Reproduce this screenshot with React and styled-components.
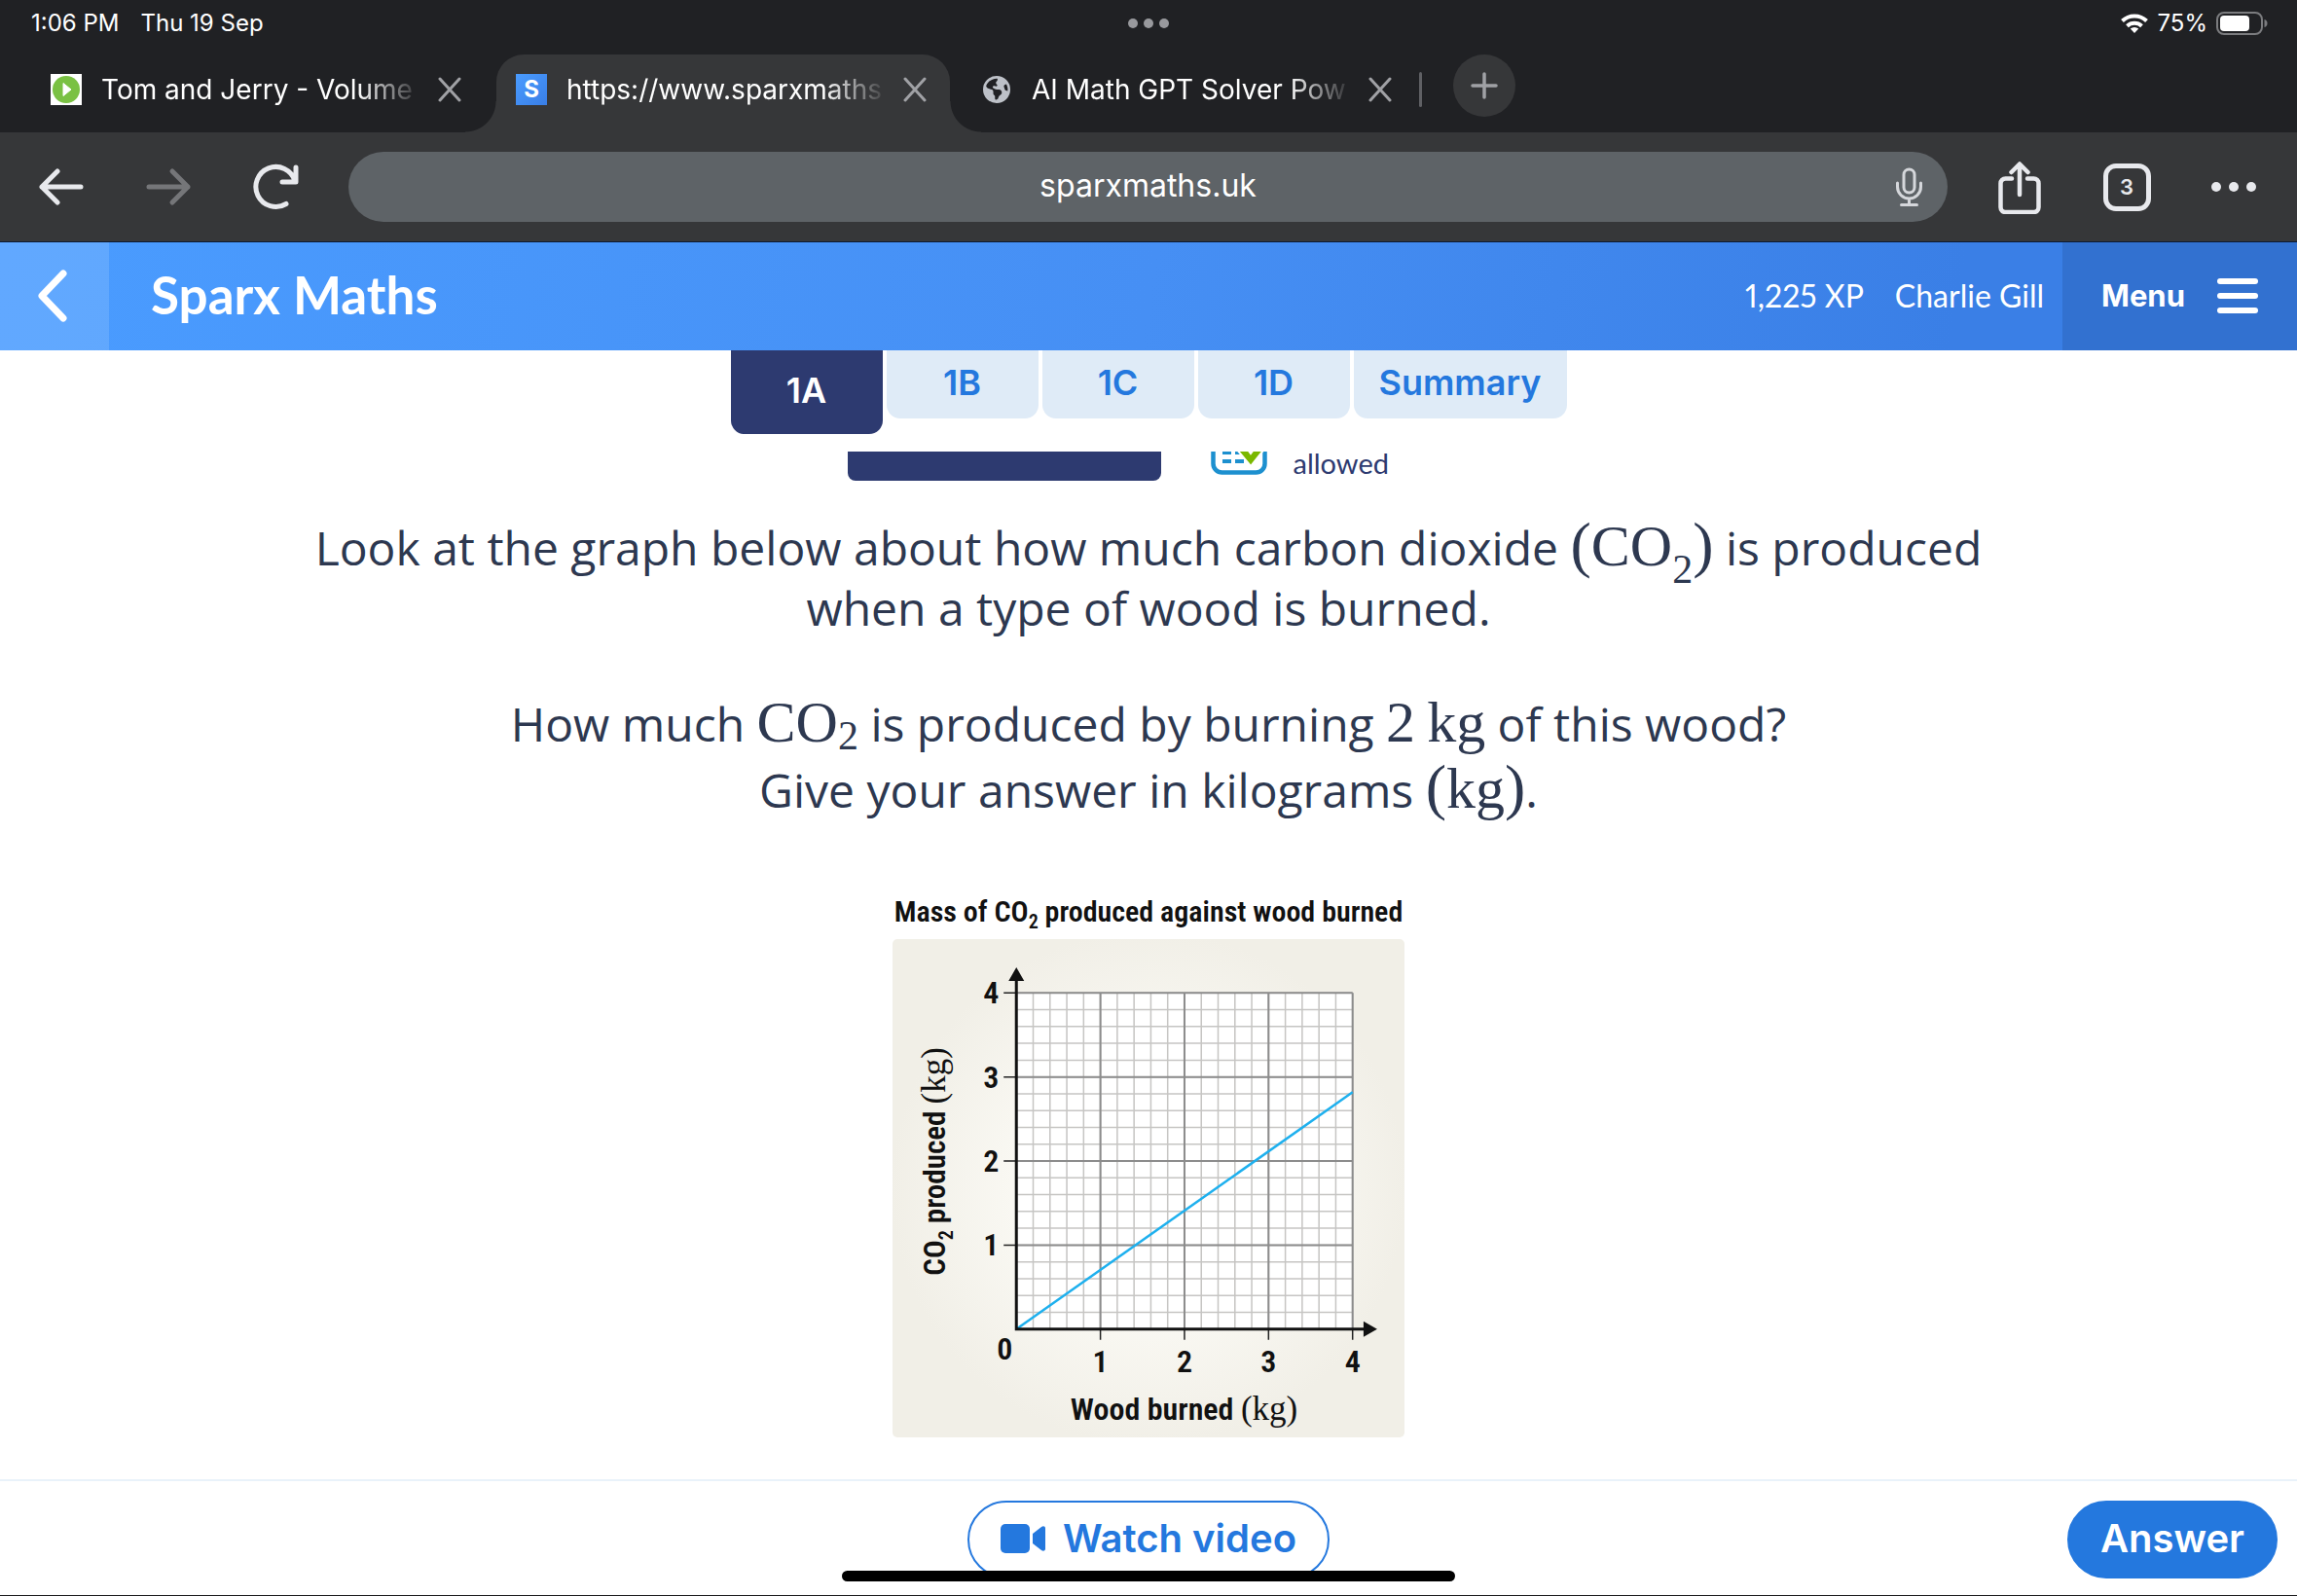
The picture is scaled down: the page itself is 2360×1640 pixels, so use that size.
import React from 'react';
import styled, { createGlobalStyle } from 'styled-components';
import { FaEarthAmericas } from 'react-icons/fa6';

const GlobalStyle = createGlobalStyle`
  * {
    box-sizing: border-box;
  }
  body {
    margin: 0;
    background: #fff;
    color: #2d3850;
    font-family: 'Open Sans', sans-serif;
  }
  button,
  input {
    margin: 0;
    padding: 0;
    border: 0;
    background: none;
    color: inherit;
    font: inherit;
  }
  svg {
    display: block;
    flex: none;
  }
`;

const Page = styled.div`
  display: flex;
  flex-direction: column;
  min-height: 100vh;
  border-bottom: 1px solid #1c1c1e;
`;

/* ---------- browser ---------- */

const Browser = styled.div`
  background: #202124;
  color: #fff;
  font-family: Inter, sans-serif;
  border-bottom: 1px solid #0b1a33;
`;

const StatusBar = styled.div`
  display: grid;
  grid-template-columns: 1fr auto 1fr;
  align-items: center;
  height: 48px;
  padding: 0 30px;
  font-size: 24px;
  line-height: 32px;
`;

const Clock = styled.div`
  display: flex;
  gap: 22px;
  padding-left: 2px;
`;

const Battery = styled.div`
  display: flex;
  justify-content: flex-end;
  align-items: center;
  gap: 9px;
`;

const TabStrip = styled.div`
  display: flex;
  gap: 12px;
  height: 88px;
  padding: 8px 32px 0;
`;

const BrowserTab = styled.div`
  position: relative;
  display: flex;
  align-items: center;
  width: 466px;
  height: 80px;
  padding: 0 24px 8px 20px;
  border-radius: 28px 28px 0 0;
  background: ${(props) => (props.$active ? '#363739' : 'transparent')};
  ${(props) =>
    props.$active &&
    `
    &::before,
    &::after {
      content: '';
      position: absolute;
      bottom: 0;
      width: 32px;
      height: 32px;
    }
    &::before {
      right: 100%;
      background: radial-gradient(circle at 0 0, #202124 31px, #363739 32px);
    }
    &::after {
      left: 100%;
      background: radial-gradient(circle at 100% 0, #202124 31px, #363739 32px);
    }
  `}
`;

const TabLabel = styled.span`
  flex: 1;
  margin: 0 16px 0 20px;
  white-space: nowrap;
  font-size: 28px;
  line-height: 40px;
  mask-image: linear-gradient(to right, #000 80%, transparent);
`;

const Divider = styled.span`
  align-self: center;
  width: 3px;
  height: 36px;
  margin: 0 0 8px -8px;
  border-radius: 2px;
  background: #5f6064;
`;

const NewTab = styled.button`
  display: grid;
  place-items: center;
  width: 64px;
  height: 64px;
  margin-left: 20px;
  border-radius: 50%;
  background: #363739;
`;

const Toolbar = styled.div`
  display: flex;
  align-items: center;
  gap: 46px;
  height: 112px;
  padding: 0 37px 0 36px;
  background: #363739;
`;

const ToolGroup = styled.div`
  display: flex;
  gap: 54px;
`;

const ToolButton = styled.button`
  display: grid;
  place-items: center;
  width: 56px;
  height: 56px;
  color: ${(props) => (props.disabled ? '#757679' : '#e8e9ed')};
`;

const Omnibox = styled.div`
  flex: 1;
  display: grid;
  grid-template-columns: 32px 1fr 32px;
  align-items: center;
  height: 72px;
  padding: 0 22px;
  border-radius: 36px;
  background: #5e6367;
`;

const Address = styled.input`
  grid-column: 2;
  width: 100%;
  padding-bottom: 2px;
  text-align: center;
  font-size: 32px;
  line-height: 40px;
`;

const TabCount = styled.span`
  display: grid;
  place-items: center;
  width: 49px;
  height: 49px;
  border: 5px solid #e8e9ed;
  border-radius: 13px;
  font-size: 22px;
  font-weight: 600;
  line-height: 24px;
`;

/* ---------- site header ---------- */

const Header = styled.header`
  display: flex;
  align-items: stretch;
  height: 111px;
  background: linear-gradient(100deg, #4a9cff, #468ff4 50%, #3a7fe6 85%);
  color: #fff;
`;

const BackButton = styled.button`
  display: grid;
  place-items: center;
  width: 112px;
  padding: 0 4px 2px 0;
  background: rgba(255, 255, 255, 0.13);
`;

const Brand = styled.h1`
  flex: 1;
  align-self: center;
  margin: 0 0 0 43px;
  padding-bottom: 4px;
  font-family: Lato, sans-serif;
  font-size: 53px;
  font-weight: 700;
  line-height: 64px;
`;

const UserInfo = styled.div`
  display: flex;
  align-items: center;
  gap: 32px;
  padding: 0 19px 3px 0;
  font-family: Lato, sans-serif;
  font-size: 32px;
  font-variant-numeric: proportional-nums;
`;

const MenuButton = styled.button`
  display: flex;
  align-items: center;
  justify-content: space-between;
  width: 241px;
  padding: 0 40px 2px;
  background: rgba(20, 60, 120, 0.2);
  font-family: Inter, sans-serif;
  font-size: 31px;
  font-weight: 700;
`;

/* ---------- task ---------- */

const Main = styled.main`
  flex: 1;
  display: flex;
  flex-direction: column;
  align-items: center;
`;

const TaskTabs = styled.nav`
  display: flex;
  align-items: flex-start;
  gap: 4px;
  height: 86px;
`;

const TaskTab = styled.a`
  display: grid;
  place-items: center;
  min-width: 156px;
  height: ${(props) => (props.$current ? '86px' : '70px')};
  padding: 0 26px 4px;
  border-radius: 0 0 14px 14px;
  background: ${(props) => (props.$current ? '#2d3a70' : '#dfebf7')};
  color: ${(props) => (props.$current ? '#fff' : '#2478de')};
  font-family: Inter, sans-serif;
  font-size: 36px;
  font-weight: 600;
  text-decoration: none;
`;

const TaskInfo = styled.div`
  display: flex;
  align-items: flex-end;
  gap: 51px;
  height: 30px;
  margin-top: 18px;
  overflow: hidden;
`;

const BookworkCode = styled.div`
  width: 322px;
  height: 80px;
  border-radius: 8px;
  background: #2d3a70;
`;

const Calculator = styled.div`
  display: flex;
  align-items: flex-end;
  gap: 27px;
  width: 246px;
  padding-bottom: 6px;
  color: #2d3a70;
  font-family: Lato, sans-serif;
  font-size: 29px;
  line-height: 24px;
`;

const Question = styled.section`
  margin-top: 38px;
  text-align: center;
  font-size: 48px;
`;

const Paragraph = styled.p`
  margin: 0 0 ${(props) => (props.$tight ? '54px' : '0')};
  line-height: ${(props) => (props.$tight ? '62px' : '68px')};
`;

const MathText = styled.span`
  font-family: 'Liberation Serif', serif;
  font-size: 60px;
  line-height: 1px;
  white-space: nowrap;

  sub {
    font-size: 42px;
    line-height: 1px;
    vertical-align: ${(props) => (props.$deep ? '-18px' : '-8px')};
  }
`;

const Paren = styled.span`
  font-size: 64px;
`;

const Figure = styled.figure`
  width: 526px;
  margin: 71px 0 0;
`;

const FigureTitle = styled.figcaption`
  margin-bottom: 8px;
  color: #111;
  font-family: 'Roboto Condensed', 'Liberation Sans Narrow', 'Open Sans', sans-serif;
  font-size: 30px;
  font-weight: 600;
  line-height: 40px;
  text-align: center;
  white-space: nowrap;

  sub {
    font-size: 20px;
    line-height: 1px;
  }
`;

const Panel = styled.div`
  border-radius: 5px;
  background: radial-gradient(circle, #fbfaf5 30%, #f1efe7 72%);

  svg {
    width: 100%;
    height: auto;
  }
  text {
    fill: #111;
    font-family: 'Roboto Condensed', 'Liberation Sans Narrow', 'Open Sans', sans-serif;
    font-size: 32px;
    font-weight: 600;
    text-anchor: middle;
  }
  .axis {
    font-size: 31px;
  }
  .sub {
    font-size: 20px;
  }
  .unit {
    font-family: 'Liberation Serif', serif;
    font-size: 35px;
    font-weight: 400;
  }
`;

/* ---------- footer ---------- */

const Footer = styled.footer`
  display: grid;
  grid-template-columns: 1fr auto 1fr;
  align-items: start;
  height: 119px;
  padding: 20px 20px 0;
  border-top: 2px solid #e9f2fa;
`;

const Pill = styled.button`
  display: flex;
  align-items: center;
  justify-content: center;
  gap: 18px;
  height: 80px;
  padding: 0 32px 3px;
  border: 2px solid #2478de;
  border-radius: 40px;
  background: ${(props) => (props.$solid ? '#2478de' : '#fff')};
  color: ${(props) => (props.$solid ? '#fff' : '#2478de')};
  font-family: Inter, sans-serif;
  font-size: 40px;
  font-weight: 600;
`;

const WatchPill = styled(Pill)`
  grid-column: 2;
`;

const AnswerPill = styled(Pill)`
  justify-self: end;
`;

const HomeIndicator = styled.div`
  position: fixed;
  bottom: 15px;
  left: 50%;
  width: 630px;
  height: 11px;
  margin-left: -315px;
  border-radius: 6px;
  background: #000;
`;

function Dots({ size, gap, color }) {
  const step = size + gap;
  return (
    <svg width={step * 2 + size} height={size} fill={color}>
      {[0, 1, 2].map((i) => (
        <circle key={i} cx={size / 2 + i * step} cy={size / 2} r={size / 2} />
      ))}
    </svg>
  );
}

function CloseIcon() {
  return (
    <svg width="24" height="26" viewBox="0 0 24 26" stroke="#a0a1a5" strokeWidth="3" strokeLinecap="round">
      <path d="M2 2l20 22M22 2L2 24" />
    </svg>
  );
}

function WifiIcon() {
  return (
    <svg width="28" height="20" viewBox="0 0 28 20" fill="none" stroke="#fff" strokeWidth="4">
      <path d="M1.500 7.500a18 18 0 0 1 25 0" />
      <path d="M6.500 12.700a11 11 0 0 1 15 0" />
      <path d="M14 20l-4.200-4.400a6 6 0 0 1 8.400 0z" fill="#fff" stroke="none" />
    </svg>
  );
}

function BatteryIcon() {
  return (
    <svg width="53" height="24" viewBox="0 0 53 24">
      <rect x="1" y="1" width="46" height="22" rx="7" fill="none" stroke="#7b7c7f" strokeWidth="2" />
      <rect x="4" y="4" width="30" height="16" rx="4" fill="#fff" />
      <path d="M49.500 8v8c2-.5 3-2 3-4s-1-3.500-3-4z" fill="#7b7c7f" />
    </svg>
  );
}

function PlayFavicon() {
  return (
    <svg width="32" height="32" viewBox="0 0 32 32">
      <path d="M0 0h32v32H0z" fill="#fff" />
      <circle cx="16" cy="16" r="14" fill="#7ac143" />
      <path d="M13 9.500l8 6.500-8 6.500z" fill="#fff" stroke="#fff" strokeWidth="1" strokeLinejoin="round" />
    </svg>
  );
}

const Favicon = styled.span`
  display: grid;
  place-items: center;
  width: 32px;
  height: 32px;
  background: ${(props) => (props.$filled ? 'linear-gradient(135deg, #4a9cff, #397ee6)' : 'none')};
  color: ${(props) => (props.$filled ? '#fff' : '#bdc1c8')};
  font-size: 24px;
  font-weight: 700;
  line-height: 32px;
`;

const tabs = [
  { title: 'Tom and Jerry - Volume', icon: <PlayFavicon /> },
  { title: 'https://www.sparxmaths', icon: <Favicon $filled>S</Favicon>, active: true },
  {
    title: 'AI Math GPT Solver Pow',
    icon: (
      <Favicon>
        <FaEarthAmericas size={28} />
      </Favicon>
    ),
  },
];

function BrowserChrome() {
  return (
    <Browser>
      <StatusBar>
        <Clock>
          <span>1:06 PM</span>
          <span>Thu 19 Sep</span>
        </Clock>
        <Dots size={10} gap={6} color="#98999d" />
        <Battery>
          <WifiIcon />
          <span>75%</span>
          <BatteryIcon />
        </Battery>
      </StatusBar>
      <TabStrip>
        {tabs.map((tab) => (
          <BrowserTab key={tab.title} $active={tab.active}>
            {tab.icon}
            <TabLabel>{tab.title}</TabLabel>
            <button type="button" aria-label="Close tab">
              <CloseIcon />
            </button>
          </BrowserTab>
        ))}
        <Divider />
        <NewTab type="button" aria-label="New tab">
          <svg width="28" height="28" viewBox="0 0 28 28" stroke="#a0a1a5" strokeWidth="3.500" strokeLinecap="round">
            <path d="M14 2v24M2 14h24" />
          </svg>
        </NewTab>
      </TabStrip>
      <Toolbar>
        <ToolGroup>
          <ToolButton type="button" aria-label="Back">
            <svg width="48" height="40" viewBox="0 0 48 40" fill="none" stroke="currentColor" strokeWidth="5" strokeLinecap="round" strokeLinejoin="round">
              <path d="M43 20H3M19 4L3 20l16 16" />
            </svg>
          </ToolButton>
          <ToolButton type="button" aria-label="Forward" disabled>
            <svg width="48" height="40" viewBox="0 0 48 40" fill="none" stroke="currentColor" strokeWidth="5" strokeLinecap="round" strokeLinejoin="round">
              <path d="M3 20h40M27 4l16 16-16 16" />
            </svg>
          </ToolButton>
          <ToolButton type="button" aria-label="Reload">
            <svg width="48" height="48" viewBox="0 0 48 48" fill="none" stroke="currentColor" strokeWidth="5" strokeLinecap="round" strokeLinejoin="round">
              <path d="M34 41.500A20.500 20.500 0 1 1 43 18M44 4v15H30" />
            </svg>
          </ToolButton>
        </ToolGroup>
        <Omnibox>
          <Address type="text" aria-label="Address" defaultValue="sparxmaths.uk" />
          <button type="button" aria-label="Voice search">
            <svg width="28" height="40" viewBox="0 0 28 40" fill="none" stroke="#d5d7db" strokeWidth="3" strokeLinecap="round">
              <rect x="9" y="2" width="11" height="24" rx="5.500" />
              <path d="M2.500 16v4a12 12 0 0 0 24 0v-4M14.500 32v6M6.500 38.500h16" />
            </svg>
          </button>
        </Omnibox>
        <ToolGroup>
          <ToolButton type="button" aria-label="Share">
            <svg width="44" height="56" viewBox="0 0 44 56" fill="none" stroke="currentColor" strokeWidth="4.500" strokeLinecap="round" strokeLinejoin="round">
              <path d="M14 19.500H7.500a5 5 0 0 0-5 5V49a5 5 0 0 0 5 5h29a5 5 0 0 0 5-5V24.500a5 5 0 0 0-5-5H30M22 36V5M13.500 13L22 4.500l8.500 8.500" />
            </svg>
          </ToolButton>
          <ToolButton type="button" aria-label="3 open tabs">
            <TabCount>3</TabCount>
          </ToolButton>
          <ToolButton type="button" aria-label="More">
            <Dots size={10} gap={8} color="#e8e9ed" />
          </ToolButton>
        </ToolGroup>
      </Toolbar>
    </Browser>
  );
}

function SiteHeader() {
  return (
    <Header>
      <BackButton type="button" aria-label="Back">
        <svg width="34" height="56" viewBox="0 0 34 56" fill="none" stroke="#fff" strokeWidth="7" strokeLinecap="round" strokeLinejoin="round">
          <path d="M28 5L6 28l22 23" />
        </svg>
      </BackButton>
      <Brand>Sparx Maths</Brand>
      <UserInfo>
        <span>1,225 XP</span>
        <span>Charlie Gill</span>
      </UserInfo>
      <MenuButton type="button">
        Menu
        <svg width="42" height="36" viewBox="0 0 42 36" fill="#fff">
          <rect width="42" height="6" rx="3" />
          <rect y="15" width="42" height="6" rx="3" />
          <rect y="30" width="42" height="6" rx="3" />
        </svg>
      </MenuButton>
    </Header>
  );
}

function CalculatorIcon() {
  return (
    <svg width="58" height="60" viewBox="0 0 58 60">
      <rect x="2.500" y="2" width="53" height="55.500" rx="9" fill="#fff" stroke="#1d90cf" strokeWidth="4.500" />
      <path d="M12 44h9v4h-9zM25 44h9v4h-9zM12 35h9v4h-9zM25 35h9v4h-9zM12 26h9v4h-9z" fill="#1d90cf" />
      <path d="M22 28l19 23 20-25-7-5-13 17-9-12z" fill="#7ab800" stroke="#fff" strokeWidth="2" />
    </svg>
  );
}

// plot area inside the 525 x 511 panel
const ORIGIN = { x: 127, y: 400 };
const UNIT = 86.2;
const px = (v) => ORIGIN.x + v * UNIT;
const py = (v) => ORIGIN.y - v * UNIT;
const minor = Array.from({ length: 20 }, (_, i) => (i + 1) / 5);
const major = [1, 2, 3, 4];

function Graph() {
  return (
    <svg viewBox="0 0 525 511" role="img" aria-label="Line graph of carbon dioxide produced against wood burned">
      <rect x={px(0)} y={py(4)} width={UNIT * 4} height={UNIT * 4} fill="#fff" />
      <g stroke="#c6c5c3" strokeWidth="1.500">
        {minor.map((v) => (
          <path key={v} d={`M${px(v)} ${py(0)}V${py(4)}M${px(0)} ${py(v)}H${px(4)}`} />
        ))}
      </g>
      <g stroke="#8c8c8c" strokeWidth="2">
        {major.map((v) => (
          <path key={v} d={`M${px(v)} ${py(0)}V${py(4)}M${px(0)} ${py(v)}H${px(4)}`} />
        ))}
      </g>
      <g stroke="#222" strokeWidth="1.500">
        {major.map((v) => (
          <path key={v} d={`M${px(v)} ${py(0)}v11M${px(0)} ${py(v)}h-13`} />
        ))}
      </g>
      <path d={`M${px(0)} ${py(0)}L${px(4)} ${py(2.82)}`} stroke="#1eb0ee" strokeWidth="2.500" />
      <path d={`M${px(0)} 40V${py(0)}H486`} fill="none" stroke="#111" strokeWidth="3" />
      <path d="M127 29l8 14h-16zM497 400l-14-8v16z" fill="#111" />
      {major.map((v) => (
        <text key={`y${v}`} x="101" y={py(v) + 11}>
          {v}
        </text>
      ))}
      {major.map((v) => (
        <text key={`x${v}`} x={px(v)} y="444">
          {v}
        </text>
      ))}
      <text x="115" y="431">0</text>
      <text x="299" y="493">
        Wood burned <tspan className="unit">(kg)</tspan>
      </text>
      <text className="axis" transform="translate(54 228) rotate(-90)">
        CO
        <tspan className="sub" dy="8">2</tspan>
        <tspan dy="-8"> produced </tspan>
        <tspan className="unit">(kg)</tspan>
      </text>
    </svg>
  );
}

export default function App() {
  return (
    <Page>
      <GlobalStyle />
      <BrowserChrome />
      <SiteHeader />
      <Main>
        <TaskTabs>
          <TaskTab href="#1a" $current>1A</TaskTab>
          <TaskTab href="#1b">1B</TaskTab>
          <TaskTab href="#1c">1C</TaskTab>
          <TaskTab href="#1d">1D</TaskTab>
          <TaskTab href="#summary">Summary</TaskTab>
        </TaskTabs>
        <TaskInfo>
          <BookworkCode />
          <Calculator>
            <CalculatorIcon />
            allowed
          </Calculator>
        </TaskInfo>
        <Question>
          <Paragraph $tight>
            Look at the graph below about how much carbon dioxide{' '}
            <MathText $deep>
              <Paren>(</Paren>CO<sub>2</sub>
              <Paren>)</Paren>
            </MathText>{' '}
            is produced
            <br />
            when a type of wood is burned.
          </Paragraph>
          <Paragraph>
            How much{' '}
            <MathText>
              CO<sub>2</sub>
            </MathText>{' '}
            is produced by burning <MathText>2{'\u2009'}kg</MathText> of this wood?
            <br />
            Give your answer in kilograms{' '}
            <MathText>
              <Paren>(</Paren>kg<Paren>)</Paren>
            </MathText>
            .
          </Paragraph>
        </Question>
        <Figure>
          <FigureTitle>
            Mass of CO<sub>2</sub> produced against wood burned
          </FigureTitle>
          <Panel>
            <Graph />
          </Panel>
        </Figure>
      </Main>
      <Footer>
        <WatchPill type="button">
          <svg width="46" height="30" viewBox="0 0 46 30" fill="currentColor">
            <rect width="30" height="30" rx="5" />
            <path d="M33 10l9-7c2-1.500 4-.5 4 1.500v21c0 2-2 3-4 1.500l-9-7z" />
          </svg>
          Watch video
        </WatchPill>
        <AnswerPill type="button" $solid>Answer</AnswerPill>
      </Footer>
      <HomeIndicator />
    </Page>
  );
}
